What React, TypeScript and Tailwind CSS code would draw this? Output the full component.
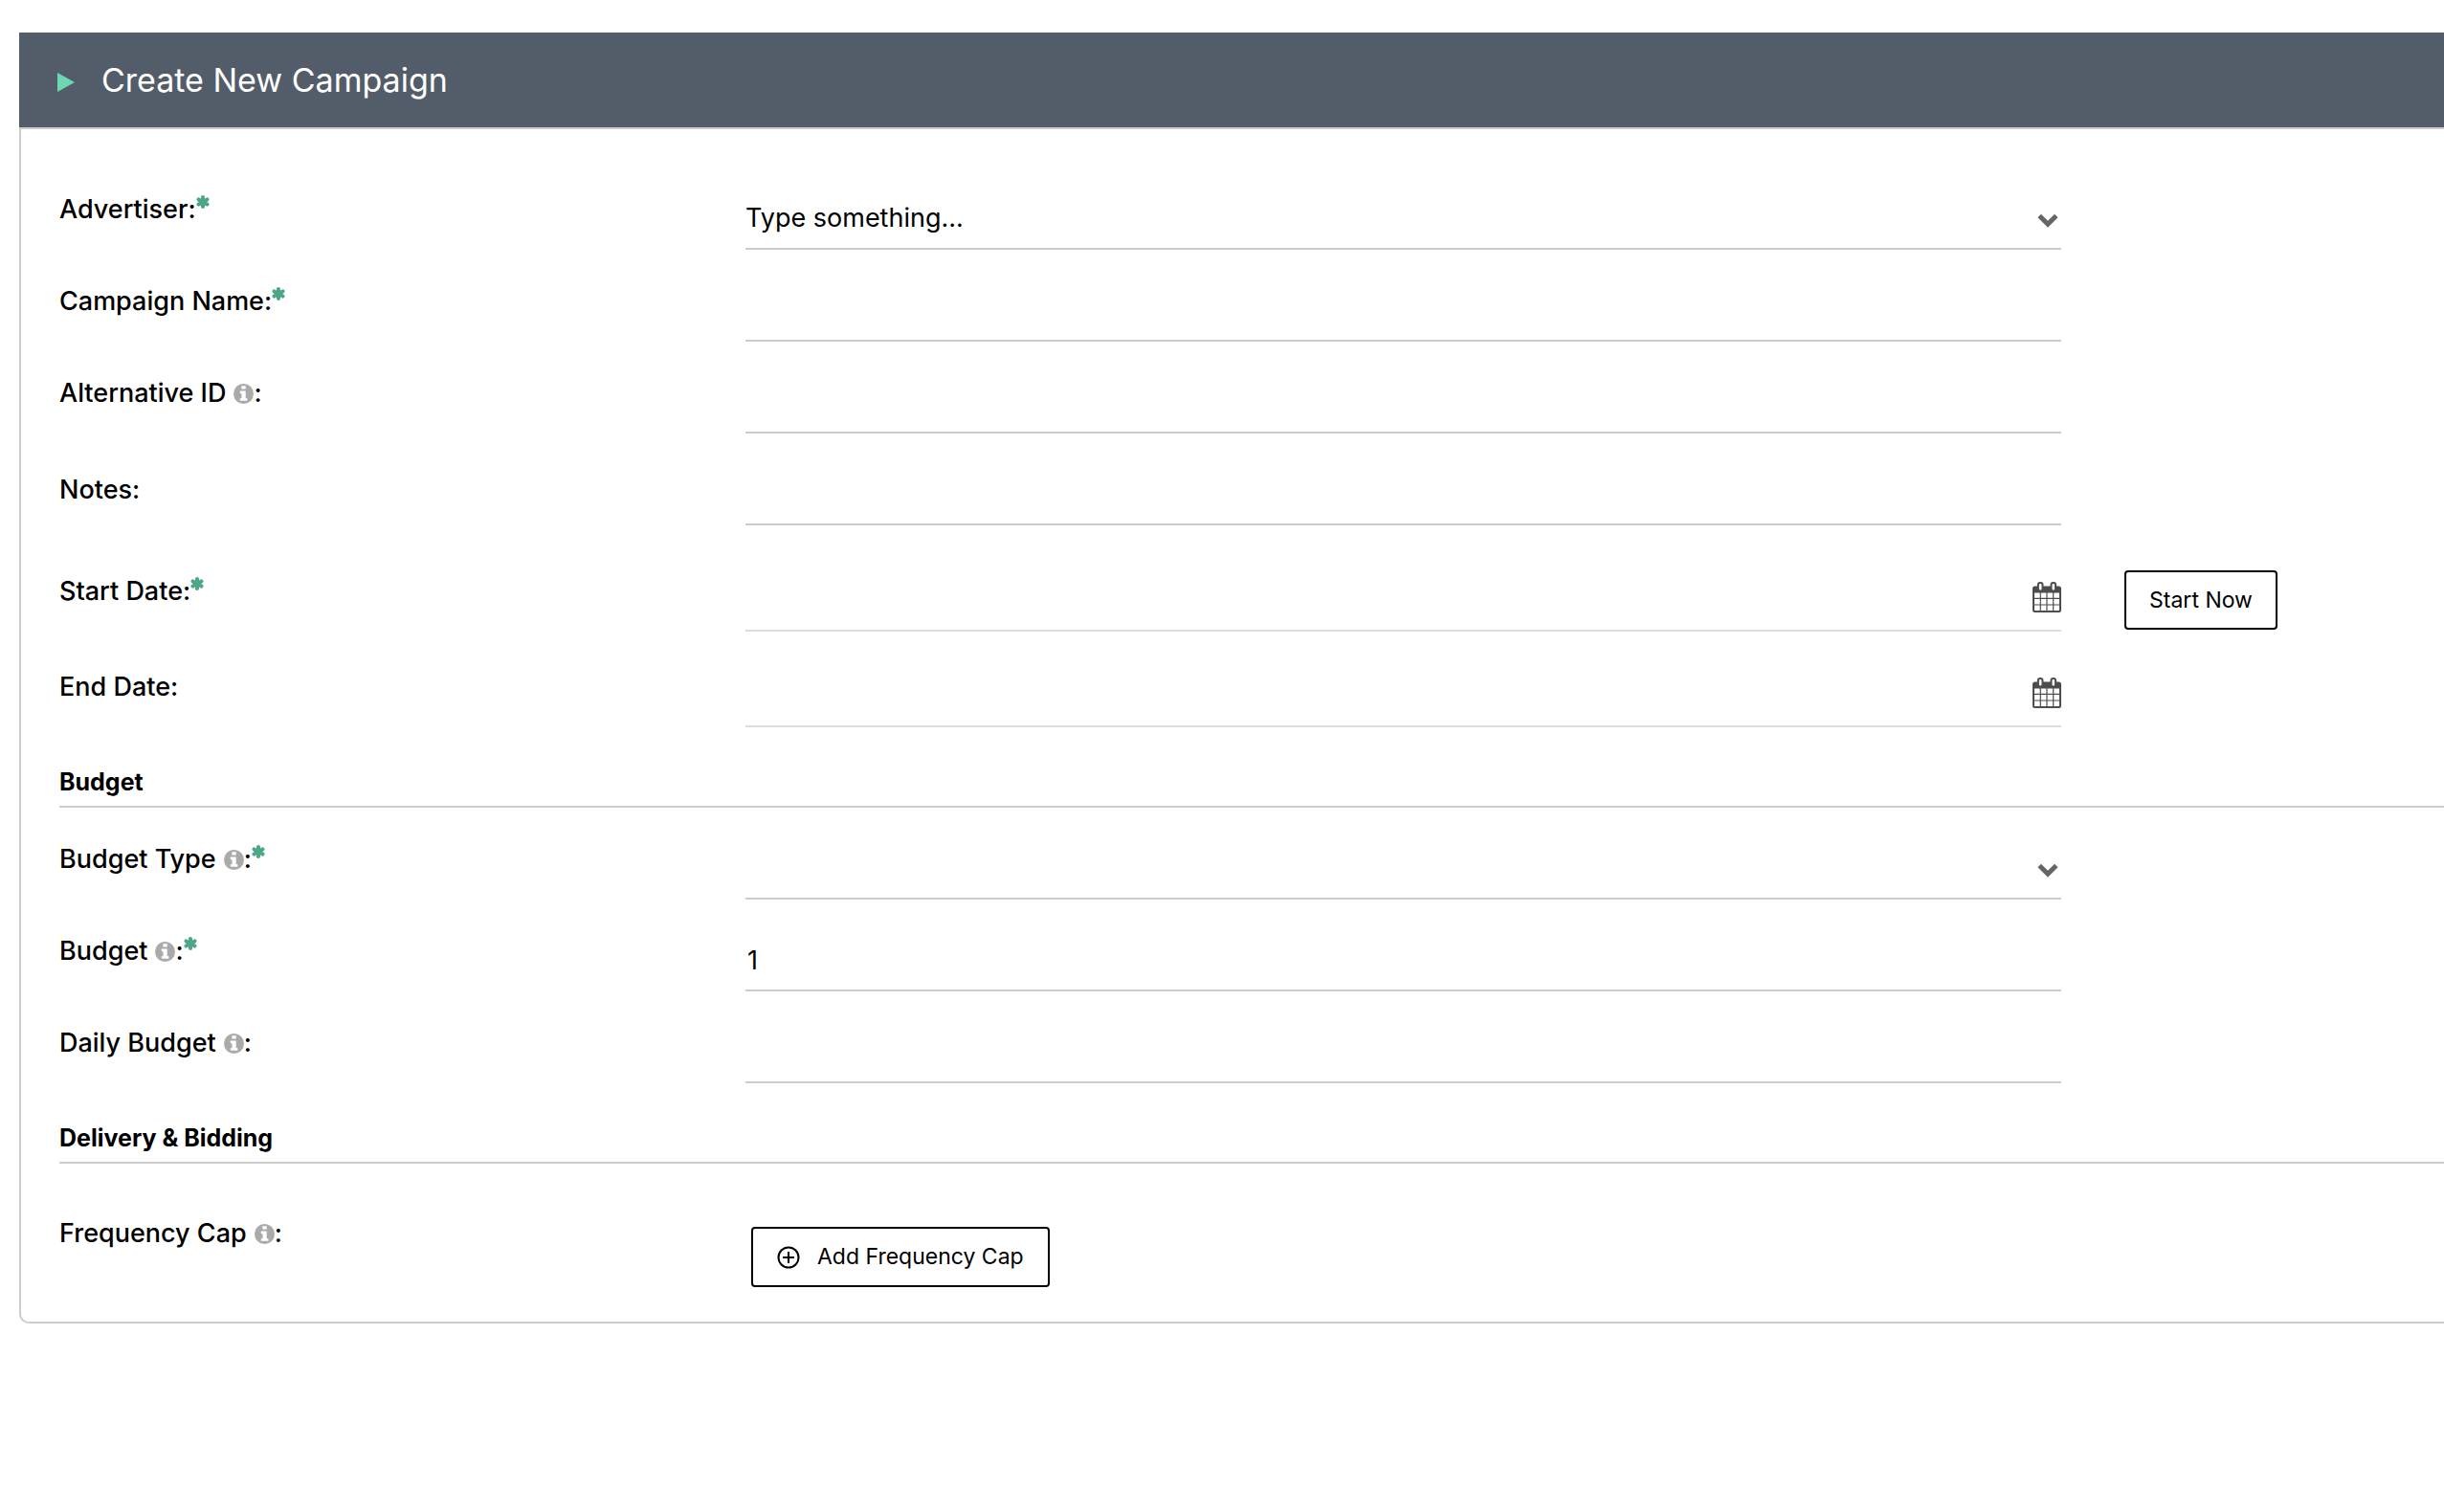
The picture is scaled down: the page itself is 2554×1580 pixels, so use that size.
import type { ReactNode } from "react";

interface RowProps {
  id?: string;
  label: string;
  info?: boolean;
  required?: boolean;
  className?: string;
  labelClass?: string;
  children: ReactNode;
  aside?: ReactNode;
}

function RequiredMark() {
  return (
    <svg className="inline-block w-3.5 h-3.5 align-top mt-[3px]" viewBox="0 0 14 14" aria-label="required">
      <g stroke="#4da685" strokeWidth="4" strokeLinecap="round">
        <path d="M7 2v10M2.500 4.400l9 5.200M11.500 4.400l-9 5.200" />
      </g>
    </svg>
  );
}

function InfoIcon() {
  return (
    <svg className="w-[21px] h-[21px] ml-2" viewBox="0 0 21 21" aria-hidden>
      <circle cx="10.5" cy="10.5" r="10.5" fill="#aaa" />
      <path fill="#fff" d="M8.3 2.200h4.400v3.400H8.300zM6.800 7.600h5.900v7.600h1.700v2.600H6.800v-2.600h1.700v-5H6.800z" />
    </svg>
  );
}

function Chevron() {
  return (
    <svg className="absolute right-[3px] bottom-[23px] w-[22px] h-[15px] pointer-events-none" viewBox="0 0 22 15" aria-hidden>
      <path d="M2.2 2.4L11 11.2l8.8-8.8" fill="none" stroke="#666" strokeWidth="5" />
    </svg>
  );
}

function CalendarIcon() {
  return (
    <svg className="w-[30px] h-8" viewBox="0 0 30 32" aria-hidden>
      <path
        fill="#4d4d4d"
        d="M2.5 4.5h25A2.5 2.5 0 0 1 30 7v22.5a2.5 2.5 0 0 1-2.5 2.5h-25A2.5 2.5 0 0 1 0 29.5V7a2.5 2.5 0 0 1 2.5-2.5z"
      />
      <path
        fill="#fff"
        d="M2 11.5h5.700v5.200H2zM8.900 11.500h5.500v5.200H8.900zM15.600 11.500h5.500v5.200h-5.500zM22.300 11.500H28v5.200h-5.700zM2 17.900h5.700v5.500H2zM8.900 17.900h5.500v5.500H8.900zM15.600 17.900h5.500v5.500h-5.500zM22.300 17.900H28v5.500h-5.700zM2 24.600h5.700V30H2zM8.900 24.600h5.500V30H8.900zM15.600 24.600h5.500V30h-5.500zM22.300 24.600H28V30h-5.700z"
      />
      <rect x="5.9" y="1" width="4.6" height="8.5" rx="2" fill="#fff" stroke="#4d4d4d" strokeWidth="2" />
      <rect x="19.5" y="1" width="4.6" height="8.5" rx="2" fill="#fff" stroke="#4d4d4d" strokeWidth="2" />
    </svg>
  );
}

function PlusCircle() {
  return (
    <svg className="w-6 h-6" viewBox="0 0 24 24" fill="none" stroke="#000" strokeWidth="2" aria-hidden>
      <circle cx="12" cy="12" r="10.5" />
      <path d="M12 6v12M6 12h12" />
    </svg>
  );
}

function Row({ id, label, info, required, className = "h-24", labelClass = "pb-6", children, aside }: RowProps) {
  return (
    <div className={`grid grid-cols-[717fr_1375fr_400fr] items-end ${className}`}>
      <label htmlFor={id} className={`flex items-center text-[27px] leading-9 font-medium ${labelClass}`}>
        <span>{label}</span>
        {info && <InfoIcon />}
        {(info || required) && (
          <span className="flex self-start">
            {info && ":"}
            {required && <RequiredMark />}
          </span>
        )}
      </label>
      {children}
      {aside}
    </div>
  );
}

const FIELD =
  "block w-full h-16 border-b-2 border-[#ccc] bg-transparent text-[27px] leading-9 outline-none appearance-none";

function TextField({ id, value }: { id: string; value?: string }) {
  return <input id={id} type="text" defaultValue={value} className={`${FIELD} pl-0.5`} />;
}

function SelectField({ id, options }: { id: string; options: string[] }) {
  return (
    <div className="relative">
      <select id={id} className={FIELD}>
        {options.map((o) => (
          <option key={o}>{o}</option>
        ))}
      </select>
      <Chevron />
    </div>
  );
}

function DateField({ id }: { id: string }) {
  return (
    <div className="flex items-center border-b-2 border-[#ddd] pb-3.5">
      <input id={id} type="text" className="grow h-10 bg-transparent text-[27px] outline-none" />
      <button type="button" aria-label="Open calendar">
        <CalendarIcon />
      </button>
    </div>
  );
}

function SectionTitle({ children }: { children: ReactNode }) {
  return (
    <h2 className="h-[84px] flex items-end pb-[7px] border-b-2 border-[#ccc] text-[25px] leading-9 font-bold">
      {children}
    </h2>
  );
}

export default function App() {
  return (
    <main className="min-h-screen bg-white pt-[34px] pl-5 overflow-hidden font-['Inter','Liberation_Sans',sans-serif] text-black">
      <header className="flex items-center h-[99px] pl-10 gap-7 bg-[#535d69]">
        <svg className="w-[18px] h-5 mt-1" viewBox="0 0 18 20" aria-hidden>
          <path d="M0 0l18 10L0 20z" fill="#6fd6b4" />
        </svg>
        <h1 className="text-[34px] leading-[44px] text-white">Create New Campaign</h1>
      </header>

      <form className="border-2 border-r-0 border-[#ccc] rounded-bl-[10px] pt-[30px] pl-10 pb-9">
        <Row id="advertiser" label="Advertiser:" required>
          <SelectField id="advertiser" options={["Type something..."]} />
        </Row>
        <Row id="name" label="Campaign Name:" required>
          <TextField id="name" />
        </Row>
        <Row id="alt-id" label="Alternative ID" info>
          <TextField id="alt-id" />
        </Row>
        <Row id="notes" label="Notes:" labelClass="pb-[19px]">
          <TextField id="notes" />
        </Row>
        <Row
          id="start"
          label="Start Date:"
          required
          className="h-[111px]"
          aside={
            <button
              type="button"
              className="justify-self-start ml-[66px] mb-0.5 w-40 h-[62px] border-2 border-black rounded text-[23px]"
            >
              Start Now
            </button>
          }
        >
          <DateField id="start" />
        </Row>
        <Row id="end" label="End Date:" className="h-[100px]">
          <DateField id="end" />
        </Row>

        <SectionTitle>Budget</SectionTitle>
        <Row id="budget-type" label="Budget Type" info required>
          <SelectField id="budget-type" options={[""]} />
        </Row>
        <Row id="budget" label="Budget" info required>
          <TextField id="budget" value="1" />
        </Row>
        <Row id="daily" label="Daily Budget" info>
          <TextField id="daily" />
        </Row>

        <SectionTitle>Delivery &amp; Bidding</SectionTitle>
        <Row id="freq-cap" label="Frequency Cap" info className="h-[129px]" labelClass="pb-[38px]">
          <button
            id="freq-cap"
            type="button"
            className="justify-self-start flex items-center gap-[18px] ml-1.5 h-[63px] px-[25px] border-2 border-black rounded text-[23px]"
          >
            <PlusCircle />
            Add Frequency Cap
          </button>
        </Row>
      </form>
    </main>
  );
}
